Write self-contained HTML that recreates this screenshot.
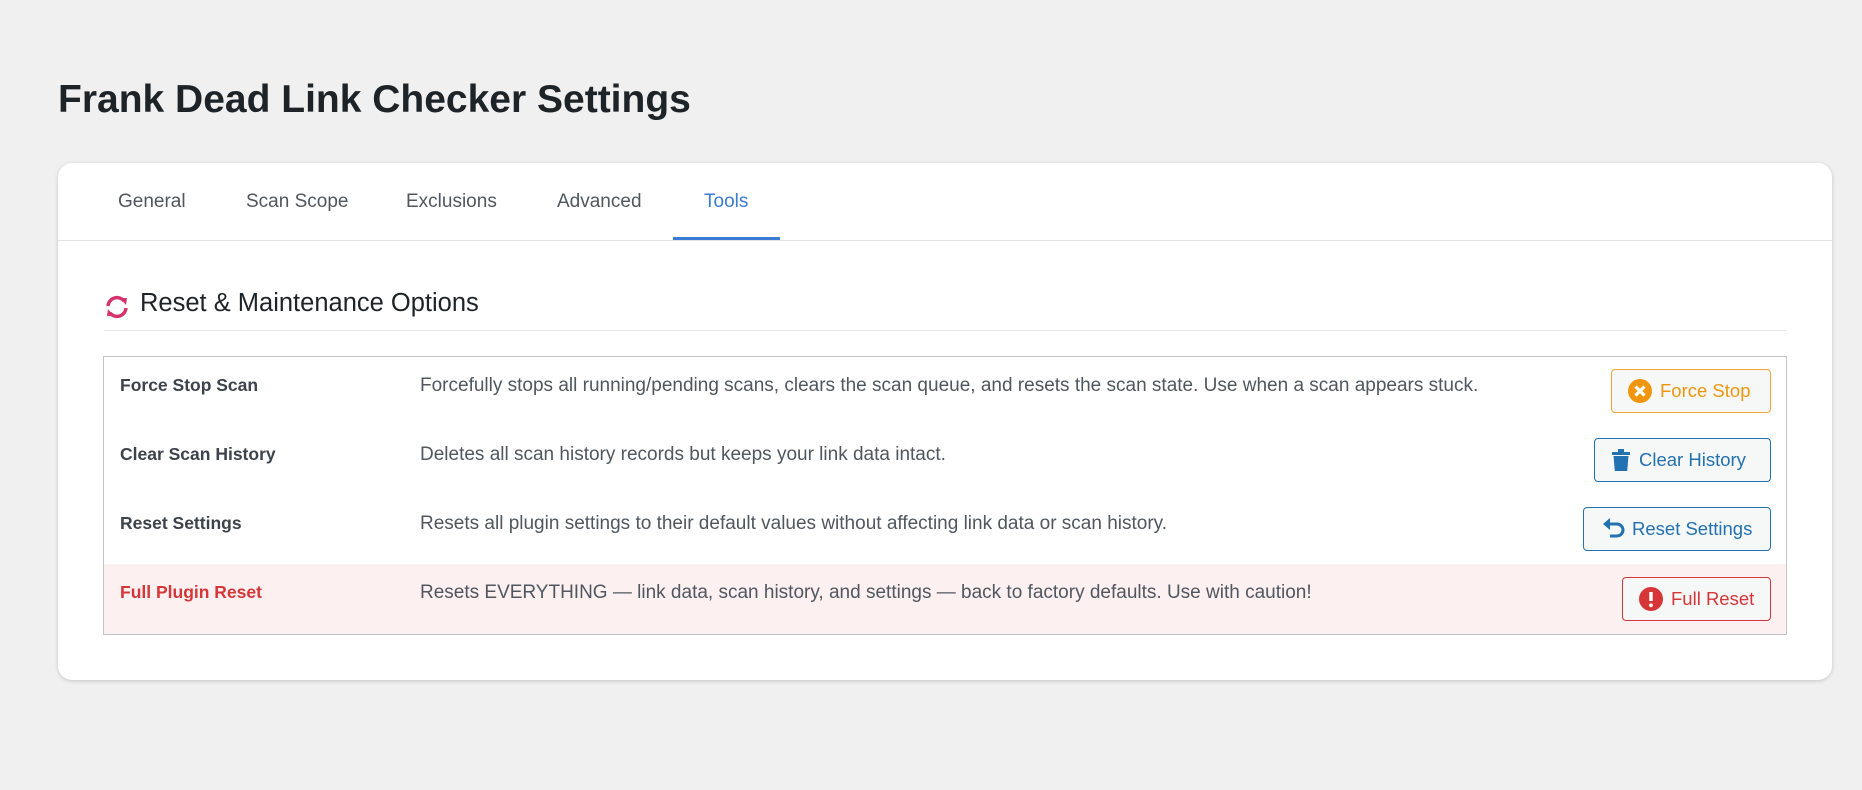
<!DOCTYPE html>
<html><head><meta charset="utf-8"><style>
*{box-sizing:border-box;margin:0;padding:0}
body{width:1862px;height:790px;background:#f0f0f1;font-family:"Liberation Sans",sans-serif;position:relative;overflow:hidden;color:#3c434a}
h1{position:absolute;left:58px;top:78px;font-size:39px;font-weight:600;color:#1d2327;letter-spacing:0px}
.card{position:absolute;left:58px;top:163px;width:1774px;height:517px;background:#fff;border-radius:14px;box-shadow:0 1px 4px rgba(0,0,0,.18)}
.tabs{position:absolute;left:0;top:0;width:100%;height:78px;border-bottom:1px solid #e2e4e7}
.tab{position:absolute;top:28px;font-size:19px;color:#50575e;font-weight:500}
.tab.on{color:#3a7bd5}
.ul{position:absolute;left:615px;top:74px;width:107px;height:3px;background:#3a7bd5}
.sec{position:absolute;left:46px;top:124px;width:1683px;height:44px;border-bottom:1px solid #e2e4e7}
.sec span{position:absolute;left:36px;top:2px;font-size:25.5px;color:#1d2327;font-weight:500}
.tbl{position:absolute;left:45px;top:193px;width:1684px;height:279px;border:1px solid #c3c4c7}
.row{position:absolute;left:0;width:100%;height:69px}
.lab{position:absolute;left:16px;top:18px;font-size:17.5px;font-weight:bold;color:#3c434a}
.desc{position:absolute;left:316px;top:18px;font-size:19px;color:#50575e}
.btn{position:absolute;right:15px;height:44px;border:1px solid;border-radius:4px;background:#f6f7f7;font-size:18.5px;display:flex;align-items:center;padding:0 15px 0 16px;gap:8px}
.btn svg{flex:none}
</style></head><body>
<h1>Frank Dead Link Checker Settings</h1>
<div class="card">
 <div class="tabs">
  <div class="tab" style="left:60px">General</div>
  <div class="tab" style="left:188px">Scan Scope</div>
  <div class="tab" style="left:348px">Exclusions</div>
  <div class="tab" style="left:499px">Advanced</div>
  <div class="tab on" style="left:646px">Tools</div>
  <div class="ul"></div>
 </div>
 <div class="sec">
  <svg style="position:absolute;left:0;top:8px" width="26" height="24" viewBox="0 0 26 24"><g fill="none" stroke="#d6336c" stroke-width="3.4"><path d="M4 11a9 9 0 0 1 16-5"/><path d="M22 13a9 9 0 0 1-16 5"/></g><path d="M16 3l7 0-1 7z" fill="#d6336c"/><path d="M10 21l-7 0 1-7z" fill="#d6336c"/></svg>
  <span>Reset &amp; Maintenance Options</span>
 </div>
 <div class="tbl">
  <div class="row" style="top:0">
   <div class="lab">Force Stop Scan</div>
   <div class="desc">Forcefully stops all running/pending scans, clears the scan queue, and resets the scan state. Use when a scan appears stuck.</div>
   <div class="btn" style="top:12px;color:#f0960e;border-color:#f0a63a;width:160px"><svg width="24" height="24" viewBox="0 0 24 24"><circle cx="12" cy="12" r="12" fill="#f0960e"/><path d="M7.5 7.5l9 9M16.5 7.5l-9 9" stroke="#fff" stroke-width="3.2"/></svg>Force Stop</div>
  </div>
  <div class="row" style="top:69px">
   <div class="lab">Clear Scan History</div>
   <div class="desc">Deletes all scan history records but keeps your link data intact.</div>
   <div class="btn" style="top:12px;color:#2271b1;border-color:#2271b1;width:177px"><svg width="20" height="24" viewBox="0 0 20 24"><path d="M1 4h18v3H1zM7 1h6v3H7z" fill="#2271b1"/><path d="M2.5 8h15l-1.3 15H3.8z" fill="#2271b1"/></svg>Clear History</div>
  </div>
  <div class="row" style="top:138px">
   <div class="lab">Reset Settings</div>
   <div class="desc">Resets all plugin settings to their default values without affecting link data or scan history.</div>
   <div class="btn" style="top:12px;color:#2271b1;border-color:#2271b1;width:188px;padding-left:18px;gap:6px"><svg width="24" height="24" viewBox="0 0 24 24"><path d="M5 7h10a6 6 0 0 1 0 12H8" fill="none" stroke="#2271b1" stroke-width="3"/><path d="M1 7l7-6v12z" fill="#2271b1"/></svg>Reset Settings</div>
  </div>
  <div class="row" style="top:207px;height:70px;background:#fcf0f1">
   <div class="lab" style="color:#d63638">Full Plugin Reset</div>
   <div class="desc">Resets EVERYTHING — link data, scan history, and settings — back to factory defaults. Use with caution!</div>
   <div class="btn" style="top:13px;color:#d63638;border-color:#d63638;width:149px"><svg width="24" height="24" viewBox="0 0 24 24"><circle cx="12" cy="12" r="12" fill="#d63638"/><path d="M12 5v9" stroke="#fff" stroke-width="3.4"/><circle cx="12" cy="18.3" r="1.9" fill="#fff"/></svg>Full Reset</div>
  </div>
 </div>
</div>
</body></html>
